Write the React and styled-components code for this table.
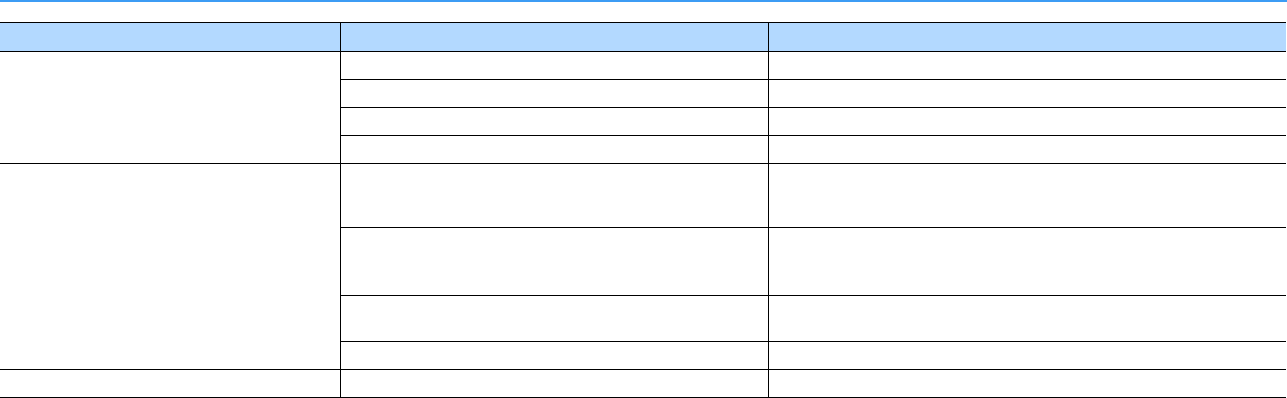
import React from "react";
import styled, { createGlobalStyle } from "styled-components";

const GlobalStyle = createGlobalStyle`
  html, body {
    margin: 0;
    padding: 0;
    background: #ffffff;
    font-family: "Liberation Sans", Arial, sans-serif;
  }
`;

const TopBar = styled.div`
  height: 2px;
  background: #3c9cf4;
`;

const Page = styled.div`
  padding-top: 20px;
`;

const Table = styled.table`
  width: 1286px;
  border-collapse: collapse;
  table-layout: fixed;
  font-size: 14px;
  color: #000;
`;

const HeadCell = styled.th`
  background: #b3d9ff;
  border-top: 1px solid #000;
  border-bottom: 1px solid #000;
  border-left: ${(p) => (p.$first ? "none" : "1px solid #000")};
  padding: 0;
  font-weight: bold;
  text-align: left;
`;

const HeadRow = styled.tr`
  height: 29px;
`;

const Row = styled.tr`
  height: ${(p) => p.$h}px;
`;

const Cell = styled.td`
  border-bottom: 1px solid #000;
  border-left: ${(p) => (p.$first ? "none" : "1px solid #000")};
  padding: 0 6px;
  vertical-align: middle;
`;

const groups = [
  { rows: [28, 28, 28, 28] },
  { rows: [64, 68, 46, 28] },
  { rows: [28] },
];

export default function App() {
  return (
    <>
      <GlobalStyle />
      <TopBar />
      <Page>
        <Table>
          <colgroup>
            <col style={{ width: 340 }} />
            <col style={{ width: 428 }} />
            <col style={{ width: 518 }} />
          </colgroup>
          <thead>
            <HeadRow>
              <HeadCell $first />
              <HeadCell />
              <HeadCell />
            </HeadRow>
          </thead>
          <tbody>
            {groups.map((g, gi) =>
              g.rows.map((h, ri) => (
                <Row key={`${gi}-${ri}`} $h={h}>
                  {ri === 0 && <Cell $first rowSpan={g.rows.length} />}
                  <Cell />
                  <Cell />
                </Row>
              ))
            )}
          </tbody>
        </Table>
      </Page>
    </>
  );
}
